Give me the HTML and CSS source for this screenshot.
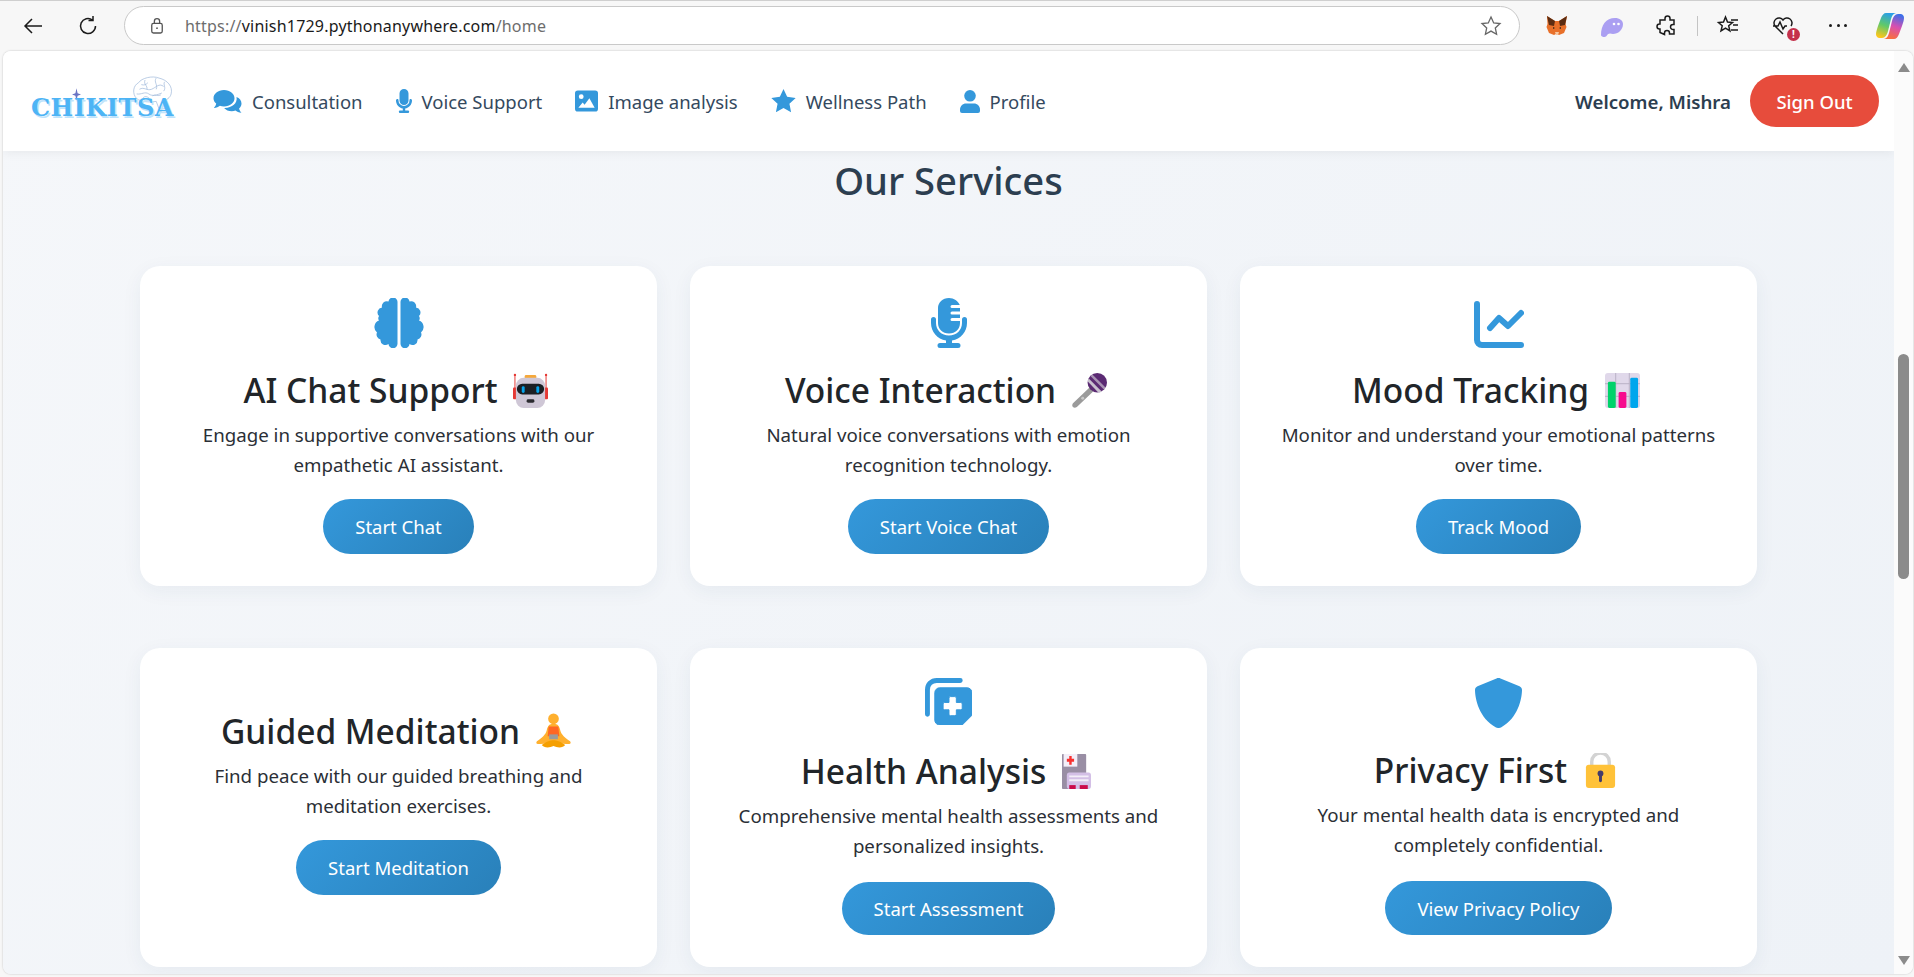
FILE: index.html
```html
<!DOCTYPE html>
<html lang="en">
<head>
    <meta charset="UTF-8">
    <meta name="viewport" content="width=device-width, initial-scale=1.0">
    <title>Chikitsa - Home</title>
    <link rel="stylesheet" href="styles.css">
</head>
<body>
    <!-- Browser toolbar -->
    <div class="toolbar">
        <svg class="tool-icon back" viewBox="0 0 24 24"><path d="M21 12H4M11 5l-7 7 7 7"/></svg>
        <svg class="tool-icon reload" viewBox="0 0 24 24"><path d="M19.5 12a7.5 7.5 0 1 1-3-6M17 2v4.500h-4.500"/></svg>
        <div class="address-bar">
            <svg class="lock-icon" viewBox="0 0 16 20"><rect x="2" y="7" width="12" height="11" rx="2"/><path d="M5 7V4.500a3 3 0 0 1 6 0V7"/><circle cx="8" cy="12.500" r="1" fill="#555" stroke="none"/></svg>
            <span class="url"><span class="url-dim">https://</span>vinish1729.pythonanywhere.com<span class="url-dim">/home</span></span>
            <svg class="url-star" viewBox="0 0 24 24"><path d="M12 3l2.700 5.900 6.300.7-4.700 4.300 1.300 6.300L12 17.100l-5.600 3.100 1.300-6.300L3 9.600l6.300-.7z"/></svg>
        </div>
        <div class="extensions">
            <svg class="ext" viewBox="0 0 24 24"><path fill="#e8702a" d="M2 2l8 5h4l8-5-1.500 8 1 3-2.500 6-5 2-2-1h-1l-2 1-5-2-2.500-6 1-3z"/><path fill="#5c2d12" d="M2 2l8 5-1 5-5-1zM22 2l-8 5 1 5 5-1z"/><path fill="#f6c7a0" d="M10 18h4l-1 3h-2z"/><path fill="#33241a" d="M8 13l2 1-2 1zM16 13l-2 1 2 1z"/></svg>
            <svg class="ext" viewBox="0 0 24 24"><path fill="#ab9ff2" d="M1 21C1 11 6 4 15 4c4.500 0 8 2.500 8 6 0 6-5 10-10 10-1 0-2-.5-3-.5-3 0-3 3.500-5.500 3.500C3 23 1 22.500 1 21z"/><circle cx="14" cy="10" r="1.300" fill="#fff"/><circle cx="18.500" cy="10" r="1.300" fill="#fff"/></svg>
            <svg class="tool-icon ext" viewBox="0 0 24 24"><path d="M10 4.500a2.500 2.500 0 0 1 5 0V6h4v4.500h-1a2.500 2.500 0 0 0 0 5h1V20h-4.500v-1a2.500 2.500 0 0 0-5 0v1.500L5 18.500V15h-.5a2.500 2.500 0 0 1 0-5H5V6h5z"/></svg>
            <span class="divider"></span>
            <svg class="tool-icon ext" viewBox="0 0 24 24"><path d="M9.500 3l2 5 5 .5-3.800 3.300 1.200 5.200-4.400-2.800L5 17l1.200-5.200L2.500 8.500l5-.5zM15 6h7M17 11h5M15 16h7"/></svg>
            <div class="ext heart-wrap">
                <svg class="tool-icon" viewBox="0 0 24 24"><path d="M12 20l-8-8a5 5 0 0 1 8-6 5 5 0 0 1 8 6M2 12h5l2-4 3 7 2-3h2"/></svg>
                <span class="heart-badge">!</span>
            </div>
            <div class="dots"><span></span><span></span><span></span></div>
            <svg class="copilot" viewBox="0 0 28 28">
                <defs>
                    <linearGradient id="cp1" x1="0.6" y1="0" x2="0.3" y2="1"><stop offset="0" stop-color="#2a9fe8"/><stop offset=".5" stop-color="#5fc96a"/><stop offset="1" stop-color="#ffc61a"/></linearGradient>
                    <linearGradient id="cp2" x1="0.6" y1="0" x2="0.3" y2="1"><stop offset="0" stop-color="#f9703e"/><stop offset=".5" stop-color="#d84fb0"/><stop offset="1" stop-color="#3a6fea"/></linearGradient>
                </defs>
                <path fill="url(#cp1)" d="M10 1h10c-3 .5-4 3-5 6l-3 12c-1 4-3 7-6 7H3c-2-.5-3-2-3-4 0-2 1-5 2-8l3-8C6 3 8 1 10 1z"/>
                <path fill="url(#cp2)" transform="rotate(180 14 14)" d="M10 1h10c-3 .5-4 3-5 6l-3 12c-1 4-3 7-6 7H3c-2-.5-3-2-3-4 0-2 1-5 2-8l3-8C6 3 8 1 10 1z"/>
            </svg>
        </div>
    </div>

    <div class="window">
        <div class="page">
            <header class="site-header">
                <nav class="site-nav">
                    <div class="logo">
                        <svg class="logo-brain" viewBox="0 0 44 38"><path d="M5 25C0 20 1 11 7 8c3-5 15-8 22-5 9 2 15 9 13 17-1 4-5 7-9 7l2 9h-6l-3-8c-6 1-16 1-21-3z"/><path d="M8 15c5-3 8 2 13 0s8-7 13-3M5 20c5 1 9-3 13 0s9 1 14-1M14 5c-2 5 3 6 2 10M26 3c-3 4 2 7 0 12M35 7c-2 3 2 6-1 10M10 10c3 1 5 0 7-2M22 22c3-2 6 1 9-1M12 24c2-2 4-1 6 0"/></svg>
                        <svg class="logo-star" viewBox="0 0 10 14"><path d="M5 0l1.200 5.500L10 7 6.200 8.500 5 14 3.800 8.500 0 7l3.800-1.500z"/></svg>
                        <span class="logo-text">CHIKITSA</span>
                    </div>
                    <ul class="nav-links">
                        <li><a href="#"><svg class="nav-icon comments" viewBox="0 0 29 24"><path d="M11 1c6 0 10.500 3.700 10.500 8.300S17 17.500 11 17.500c-1.500 0-2.900-.2-4.100-.7C5.500 18 3.500 19 .8 19c1.500-1.500 2.200-3 2.400-4.400C1.500 13.200.5 11.300.5 9.300.5 4.700 5 1 11 1z"/><path d="M23.500 8c3 1 5 3.600 5 6.600 0 2-1 3.700-2.400 5 .2 1.300 1 2.800 2.400 4.200-2.700 0-4.700-1-6-2.200-1.100.4-2.400.6-3.700.6-3.200 0-6-1.300-7.700-3.300 7.500.3 13.800-4.600 12.400-10.900z"/></svg>Consultation</a></li>
                        <li><a href="#"><svg class="nav-icon voice" viewBox="0 0 16 24"><path d="M8 0a4.500 4.500 0 0 0-4.500 4.500v7a4.500 4.500 0 0 0 9 0v-7A4.500 4.500 0 0 0 8 0z"/><path d="M1.500 10c-.8 0-1.500.6-1.500 1.400 0 4 3 7.400 6.800 8v2.200H4a1.200 1.200 0 0 0 0 2.400h8a1.200 1.200 0 0 0 0-2.400H9.200v-2.200c3.800-.6 6.800-4 6.800-8 0-.8-.7-1.400-1.500-1.400s-1 .6-1 1.400a5.500 5.500 0 0 1-11 0c0-.8-.2-1.400-1-1.400z"/></svg>Voice Support</a></li>
                        <li><a href="#"><svg class="nav-icon image" viewBox="0 0 24 22"><path fill-rule="evenodd" d="M3 0h18a3 3 0 0 1 3 3v16a3 3 0 0 1-3 3H3a3 3 0 0 1-3-3V3a3 3 0 0 1 3-3zm3.500 4a2.500 2.500 0 1 0 0 5 2.500 2.500 0 0 0 0-5zM15 8l-5 7-2-2.500L3.500 18h17z"/></svg>Image analysis</a></li>
                        <li><a href="#"><svg class="nav-icon star" viewBox="0 0 24 23"><path d="M12 0l3.500 7.500 8.200 1-6 5.700 1.600 8.100L12 18.300l-7.300 4 1.600-8.100-6-5.700 8.200-1z"/></svg>Wellness Path</a></li>
                        <li><a href="#"><svg class="nav-icon user" viewBox="0 0 20 23"><circle cx="10" cy="5.800" r="5.800"/><path d="M6 13.500h8c3.300 0 6 2.700 6 6V21a2 2 0 0 1-2 2H2a2 2 0 0 1-2-2v-1.500c0-3.300 2.700-6 6-6z"/></svg>Profile</a></li>
                    </ul>
                    <div class="nav-user">
                        <span class="welcome">Welcome, Mishra</span>
                        <a class="sign-out" href="#">Sign Out</a>
                    </div>
                </nav>
            </header>

            <section class="services">
                <h2>Our Services</h2>
                <div class="service-grid">
                    <div class="card">
                        <svg class="card-icon" viewBox="0 0 50 50"><path d="M23.500 4.500A4.500 4.500 0 0 0 14.500 3.500 5 5 0 0 0 8 9.500 5 5 0 0 0 5 18 4 4 0 0 0 5 22.500 7 7 0 0 0 3 34.500 5 5 0 0 0 6.500 41.500 5 5 0 0 0 14.500 46 4.500 4.500 0 0 0 23.500 45.500z"/><path transform="matrix(-1 0 0 1 50 0)" d="M23.500 4.500A4.500 4.500 0 0 0 14.500 3.500 5 5 0 0 0 8 9.500 5 5 0 0 0 5 18 4 4 0 0 0 5 22.500 7 7 0 0 0 3 34.500 5 5 0 0 0 6.500 41.500 5 5 0 0 0 14.500 46 4.500 4.500 0 0 0 23.500 45.500z"/></svg>
                        <h3>AI Chat Support
                            <svg class="emoji" viewBox="0 0 36 36"><path stroke="#e53935" stroke-width="1" d="M2 1v24M34 1v24"/><circle cx="2" cy="2" r="1.200" fill="#e53935"/><circle cx="34" cy="2" r="1.200" fill="#e53935"/><rect x="0" y="15" width="4" height="12" rx="1" fill="#e53935"/><rect x="32" y="15" width="4" height="12" rx="1" fill="#e53935"/><rect x="12" y="2" width="12" height="4" rx="1.500" fill="#f5a83b"/><rect x="3" y="5" width="30" height="31" rx="8" fill="#cfc7d6"/><rect x="4" y="11" width="28" height="11" rx="5.500" fill="#1c1f24"/><rect x="9" y="13.500" width="3" height="7" rx="1.500" fill="#06a4ec"/><rect x="24" y="13.500" width="3" height="7" rx="1.500" fill="#06a4ec"/><rect x="14" y="27" width="8" height="3.500" rx="1.500" fill="#2b2b30"/></svg>
                        </h3>
                        <p>Engage in supportive conversations with our empathetic AI assistant.</p>
                        <a class="card-btn" href="#">Start Chat</a>
                    </div>
                    <div class="card">
                        <svg class="card-icon" viewBox="0 0 36 50"><path d="M18 0C11.500 0 7 4.700 7 10v15c0 6 4.500 10.500 11 10.500S29 31 29 25v-2h-8a1.300 1.300 0 0 1 0-3h8v-3.500h-8a1.300 1.300 0 0 1 0-3h8V10h-8a1.300 1.300 0 0 1 0-3h7.800C27 3 23 0 18 0z"/><path d="M2.500 19A2.500 2.500 0 0 0 0 21.500V25c0 9 6.300 16 15 17.500V45H9a2.500 2.500 0 0 0 0 5h18a2.500 2.500 0 0 0 0-5h-6v-2.500C29.700 41 36 34 36 25v-3.500a2.500 2.500 0 0 0-5 0V25c0 7-5.500 12.500-13 12.500S5 32 5 25v-3.500A2.500 2.500 0 0 0 2.500 19z"/></svg>
                        <h3>Voice Interaction
                            <svg class="emoji" viewBox="0 0 36 36"><path d="M21 12l4 4L5 35c-1.500 1-3 1-4 0s-1-2.500 0-4z" fill="#9b9b9b"/><circle cx="11" cy="26" r="1.500" fill="#c8c8c8"/><circle cx="26" cy="10" r="10" fill="#5b2a73"/><path d="M17 5.500l13.500 13.500-3 1.500L16 8.500z" fill="#c9c0cf"/><path d="M21 1.500L34.500 15l-1.200 2.500L19 3z" fill="#c9c0cf" opacity=".7"/></svg>
                        </h3>
                        <p>Natural voice conversations with emotion recognition technology.</p>
                        <a class="card-btn" href="#">Start Voice Chat</a>
                    </div>
                    <div class="card">
                        <svg class="card-icon chart" viewBox="0 0 50 47"><path d="M3 3v36a5 5 0 0 0 5 5h39" fill="none" stroke-width="6" stroke-linecap="round"/><path d="M16 27l9-10 9 8 13-13" fill="none" stroke-width="6" stroke-linecap="round" stroke-linejoin="round"/></svg>
                        <h3>Mood Tracking
                            <svg class="emoji" viewBox="0 0 36 36"><rect width="36" height="36" rx="3" fill="#e0d8ea"/><path d="M0 11h36M0 24h36M11 0v36M25 0v36" stroke="#b8afc4" stroke-width="1"/><rect x="3" y="9" width="8" height="27" rx="1.500" fill="#00d26a"/><rect x="14" y="19.500" width="8" height="16.500" rx="1.500" fill="#f70a8d"/><rect x="26" y="5" width="8" height="31" rx="1.500" fill="#00a6ed"/></svg>
                        </h3>
                        <p>Monitor and understand your emotional patterns over time.</p>
                        <a class="card-btn" href="#">Track Mood</a>
                    </div>
                    <div class="card no-icon">
                        <h3>Guided Meditation
                            <svg class="emoji" viewBox="0 0 36 36"><circle cx="18" cy="6" r="5.500" fill="#ffb02e"/><path d="M18 11c-4 0-6 2-7 7-1 4-5 8-10 11-1 1-1 3 1 3 4 0 8-1 11-1h10c3 0 7 1 11 1 2 0 2-2 1-3-5-3-9-7-10-11-1-5-3-7-7-7z" fill="#ffb02e"/><path d="M13 14h10l1 10H12z" fill="#ff6723"/><rect x="13.500" y="22" width="9" height="5" fill="#9b9b9b"/><path d="M6 33c5-4 9-5 12-5s7 1 12 5c-2 3-8 3-12 1-4 2-10 2-12-1z" fill="#f59f00"/></svg>
                        </h3>
                        <p>Find peace with our guided breathing and meditation exercises.</p>
                        <a class="card-btn" href="#">Start Meditation</a>
                    </div>
                    <div class="card tight">
                        <svg class="card-icon health" viewBox="0 0 48 48"><path d="M2.500 37V12C2.500 6.500 6.500 2.500 12 2.500h24" fill="none" stroke-width="5" stroke-linecap="round"/><path fill-rule="evenodd" d="M15 10h28a5 5 0 0 1 5 5v23L38 48H15a5 5 0 0 1-5-5V15a5 5 0 0 1 5-5zm11 9a1.500 1.500 0 0 0-1.500 1.500V25H20a1.500 1.500 0 0 0-1.500 1.500V31a1.500 1.500 0 0 0 1.500 1.500h4.500V37a1.500 1.500 0 0 0 1.500 1.500h4.500A1.500 1.500 0 0 0 32 37v-4.500h4.500A1.500 1.500 0 0 0 38 31v-4.500a1.500 1.500 0 0 0-1.500-1.500H32v-4.500a1.500 1.500 0 0 0-1.500-1.500z"/></svg>
                        <h3>Health Analysis
                            <svg class="emoji slim" viewBox="0 0 36 36" preserveAspectRatio="none"><rect x="0" y="0" width="30" height="36" rx="1" fill="#998ea4"/><rect x="2" y="0" width="17" height="13" fill="#f3eef8"/><path d="M9 2h3v3h3v3h-3v3H9V8H6V5h3z" fill="#f8312f"/><rect x="6" y="19" width="30" height="17" rx="3" fill="#d3bfe6"/><path d="M9 23h24M9 27h24" stroke="#f3eef8" stroke-width="2"/><rect x="9" y="32" width="8" height="4" fill="#ca0b4a"/><rect x="22" y="32" width="10" height="4" fill="#ca0b4a"/></svg>
                        </h3>
                        <p>Comprehensive mental health assessments and personalized insights.</p>
                        <a class="card-btn" href="#">Start Assessment</a>
                    </div>
                    <div class="card tight">
                        <svg class="card-icon" viewBox="0 0 47 50"><path d="M23.500 0c.7 0 1.400.1 2 .4L44.500 8.300C46 9 47 10.300 47 12c-.1 9-4 28-21 37.500-1.600.7-3.400.7-5 0C4 40 .1 21 0 12 0 10.300 1 9 2.500 8.300L21.500.4C22.100.1 22.800 0 23.500 0z"/></svg>
                        <h3>Privacy First
                            <svg class="emoji" viewBox="0 0 36 36"><path d="M9 16V9a9 9 0 0 1 18 0v7" fill="none" stroke="#d3d3d3" stroke-width="3.500"/><rect x="3" y="12" width="30" height="24" rx="3" fill="#ffc239"/><circle cx="18" cy="21" r="3" fill="#433b6b"/><rect x="16.500" y="21" width="3" height="9" rx="1.500" fill="#433b6b"/></svg>
                        </h3>
                        <p>Your mental health data is encrypted and completely confidential.</p>
                        <a class="card-btn" href="#">View Privacy Policy</a>
                    </div>
                </div>
            </section>
        </div>
        <!-- Scrollbar -->
        <div class="scrollbar">
            <span class="arrow-up"></span>
            <div class="scroll-track"><div class="scroll-thumb"></div></div>
            <span class="arrow-down"></span>
        </div>
    </div>
</body>
</html>
```

FILE: styles.css
```css
* {
  margin: 0;
  padding: 0;
  box-sizing: border-box;
}

html, body {
  height: 100%;
  overflow: hidden;
}

body {
  font-family: "Noto Sans", Arial, sans-serif;
  background-color: #f7f7f7;
  border-top: 1px solid #cfcfcf;
  display: flex;
  flex-direction: column;
}

/* Browser toolbar */
.toolbar {
  height: 50px;
  flex: none;
  display: flex;
  align-items: center;
  padding: 0 0 1px 21px;
}

.tool-icon {
  width: 24px;
  height: 24px;
  fill: none;
  stroke: #1b1b1b;
  stroke-width: 1.500;
}

.reload {
  margin-left: 31px;
}

.address-bar {
  width: 1396px;
  height: 39px;
  flex: none;
  margin-left: 24px;
  background-color: #fff;
  border: 1px solid #c9c9c9;
  border-radius: 20px;
  display: flex;
  align-items: center;
  padding: 0 16px 0 25px;
}

.lock-icon {
  width: 14px;
  height: 18px;
  fill: none;
  stroke: #555;
  stroke-width: 1.500;
}

.url {
  margin-left: 21px;
  flex: 1;
  font-size: 16px;
  letter-spacing: 0.2px;
  color: #1a1a1a;
}

.url-dim {
  color: #6d6d6d;
}

.url-star {
  width: 24px;
  height: 24px;
  fill: none;
  stroke: #666;
  stroke-width: 1.300;
}

.extensions {
  flex: 1;
  display: flex;
  align-items: center;
  padding-left: 25px;
}

.ext {
  width: 24px;
  height: 24px;
  flex: none;
  margin-right: 31px;
}

.divider {
  width: 1px;
  height: 20px;
  background-color: #c4c4c4;
  margin: 0 18px 0 -13px;
}

.heart-wrap {
  position: relative;
}

.heart-badge {
  position: absolute;
  right: -5px;
  bottom: -3px;
  width: 13px;
  height: 13px;
  border-radius: 50%;
  background-color: #c4314b;
  color: #fff;
  font-size: 10px;
  font-weight: 700;
  line-height: 13px;
  text-align: center;
}

.dots {
  width: 24px;
  margin-right: 26px;
  display: flex;
  justify-content: space-between;
  padding: 0 3px;
}

.dots span {
  width: 3px;
  height: 3px;
  border-radius: 50%;
  background-color: #1b1b1b;
}

.copilot {
  width: 28px;
  height: 28px;
  flex: none;
}

/* Page window */
.window {
  flex: 1;
  min-height: 0;
  margin: 0 1px 3px 3px;
  border-radius: 8px;
  overflow: hidden;
  display: flex;
  box-shadow: 0 0 2px rgba(0, 0, 0, 0.25);
  background-color: #fdfdfd;
}

.page {
  flex: 1;
  min-width: 0;
  background: linear-gradient(135deg, #f5f7fa, #eef2f7);
}

.scrollbar {
  width: 19px;
  flex: none;
  background-color: #fbfbfb;
  display: flex;
  flex-direction: column;
  align-items: center;
  padding: 12px 0 9px;
}

.scroll-track {
  flex: 1;
  width: 100%;
  padding: 282px 4px 0;
}

.scroll-thumb {
  height: 225px;
  background-color: #8b8b8b;
  border-radius: 6px;
}

.arrow-up {
  width: 0;
  height: 0;
  border-left: 6px solid transparent;
  border-right: 6px solid transparent;
  border-bottom: 9px solid #8b8b8b;
}

.arrow-down {
  width: 0;
  height: 0;
  border-left: 6px solid transparent;
  border-right: 6px solid transparent;
  border-top: 9px solid #8b8b8b;
}

/* Site header */
.site-header {
  background-color: #fff;
  height: 100px;
  box-shadow: 0 2px 10px rgba(0, 0, 0, 0.06);
}

.site-nav {
  height: 100%;
  display: flex;
  align-items: center;
  padding: 0 15px 0 28px;
}

.logo {
  position: relative;
  width: 145px;
  height: 46px;
  flex: none;
}

.logo-text {
  position: absolute;
  left: 0;
  bottom: 2px;
  font-family: "DejaVu Serif", serif;
  font-weight: 700;
  font-size: 24px;
  line-height: 28px;
  letter-spacing: 0.5px;
  color: #4db4f5;
  text-shadow: 1.500px 1.500px 0 #bfe3fb;
}

.logo-brain {
  position: absolute;
  right: 3px;
  top: -3px;
  width: 41px;
  height: 36px;
  fill: none;
  stroke: #a3bbdc;
  stroke-width: 0.8;
}

.logo-star {
  position: absolute;
  left: 41px;
  top: 10px;
  width: 9px;
  height: 13px;
  fill: #6a74c4;
}

.nav-links {
  list-style: none;
  display: flex;
  margin-left: 37px;
  gap: 33px;
}

.nav-links a {
  display: flex;
  align-items: center;
  gap: 10px;
  color: #34495e;
  font-size: 18.500px;
  text-decoration: none;
}

.nav-icon {
  fill: #3498db;
  height: 24px;
  width: auto;
  flex: none;
}

.comments { width: 29px; }
.voice { width: 16px; height: 24px; }
.image { width: 23px; height: 22px; }
.star { width: 25px; height: 24px; }
.user { width: 20px; height: 23px; }

.nav-user {
  margin-left: auto;
  display: flex;
  align-items: center;
  gap: 19px;
}

.welcome {
  font-size: 18.700px;
  font-weight: 600;
  color: #2c3e50;
}

.sign-out {
  width: 129px;
  height: 52px;
  background-color: #e74c3c;
  border-radius: 26px;
  color: #fff;
  font-size: 18.500px;
  font-weight: 500;
  display: flex;
  align-items: center;
  justify-content: center;
  text-decoration: none;
}

/* Services */
.services {
  padding: 0 0 0 137px;
  width: 1754px;
}

.services h2 {
  font-size: 38.200px;
  font-weight: 500;
  color: #2c3e50;
  text-align: center;
  line-height: 50px;
  height: 115px;
  padding-top: 4px;
}

.service-grid {
  display: grid;
  grid-template-columns: repeat(3, 1fr);
  grid-template-rows: 320px 319px;
  column-gap: 33px;
  row-gap: 62px;
}

.card {
  background-color: #fff;
  border-radius: 20px;
  box-shadow: 0 5px 20px rgba(40, 70, 110, 0.06);
  padding: 32px;
  display: flex;
  flex-direction: column;
  align-items: center;
  justify-content: center;
  text-align: center;
}

.card.no-icon {
  padding-bottom: 46px;
}

.card-icon {
  height: 50px;
  width: auto;
  fill: #3498db;
  stroke: #3498db;
  stroke-width: 0;
  flex: none;
  margin-bottom: 18px;
}

.card-icon.chart {
  height: 47px;
  margin-top: 3px;
  stroke-width: 1;
}

.card-icon.health {
  height: 47px;
  margin-bottom: 22px;
  stroke-width: 1;
}

.card.tight .card-icon {
  margin-top: -2px;
}

.card.tight p {
  margin-bottom: 21px;
}

.card h3 {
  font-size: 33.500px;
  font-weight: 500;
  line-height: 48px;
  color: #212529;
  display: flex;
  align-items: center;
  gap: 16px;
  margin-bottom: 6px;
}

.emoji {
  width: 35px;
  height: 35px;
  flex: none;
  margin-right: 5px;
}

.emoji.slim {
  width: 29px;
}

.card p {
  font-size: 18.700px;
  line-height: 30px;
  color: #2b2f36;
  margin-bottom: 19px;
}

.card-btn {
  height: 55px;
  padding: 0 32px;
  border-radius: 28px;
  background: linear-gradient(135deg, #3498db, #2980b9);
  color: #fff;
  font-size: 18.500px;
  display: flex;
  align-items: center;
  text-decoration: none;
}
```
